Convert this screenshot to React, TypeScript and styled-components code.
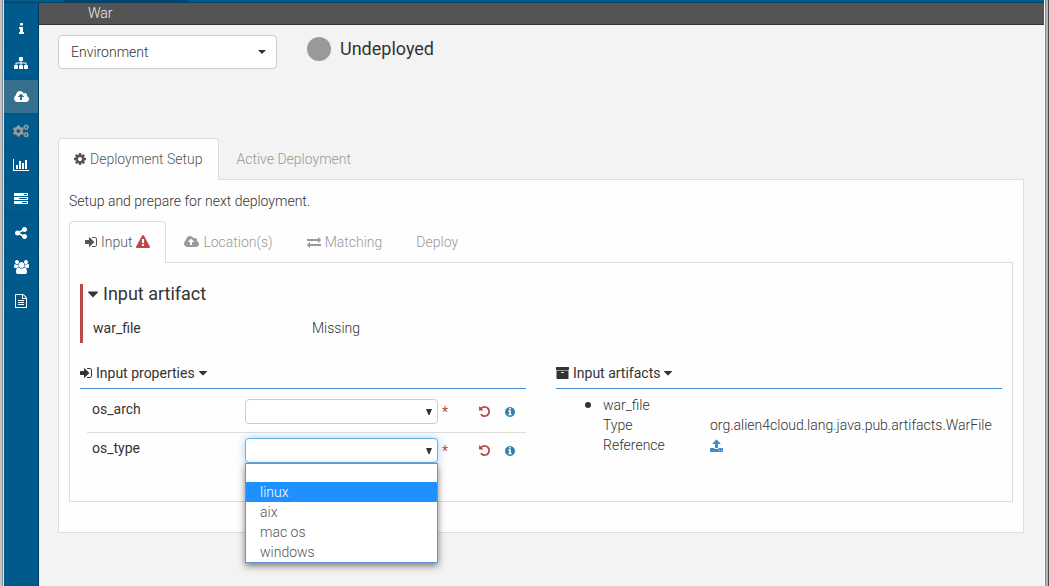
import React from "react";
import styled, { createGlobalStyle } from "styled-components";
import { FaCogs } from "react-icons/fa";

const GlobalStyle = createGlobalStyle`
  *, *::before, *::after { box-sizing: border-box; }
  body {
    margin: 0;
    background: #f3f3f3;
    color: #333;
    font: 300 14px/20px Roboto, "Liberation Sans", sans-serif;
  }
  button, select, input { font: inherit; color: inherit; }
  h2, h3, ul, dl, dd, p { margin: 0; padding: 0; font-weight: inherit; }
`;

/* Icon outlines on a 1792-unit-high grid: [left edge, width, path] */
const bar = "q0 26-19 45t-45 19h-1664q-26 0-45-19t-19-45v-256q0-26 19-45t45-19h1664q26 0 45 19t19 45z";
const glyphs = {
  info: [576, 640, "M1216 1344v128q0 26-19 45t-45 19h-512q-26 0-45-19t-19-45v-128q0-26 19-45t45-19h64v-384h-64q-26 0-45-19t-19-45v-128q0-26 19-45t45-19h384q26 0 45 19t19 45v576h64q26 0 45 19t19 45zm-128-1152v192q0 26-19 45t-45 19h-256q-26 0-45-19t-19-45v-192q0-26 19-45t45-19h256q26 0 45 19t19 45z"],
  sitemap: [0, 1792, "M1792 1248v320q0 40-28 68t-68 28h-320q-40 0-68-28t-28-68v-320q0-40 28-68t68-28h96v-192h-512v192h96q40 0 68 28t28 68v320q0 40-28 68t-68 28h-320q-40 0-68-28t-28-68v-320q0-40 28-68t68-28h96v-192h-512v192h96q40 0 68 28t28 68v320q0 40-28 68t-68 28h-320q-40 0-68-28t-28-68v-320q0-40 28-68t68-28h96v-192q0-52 38-90t90-38h512v-192h-96q-40 0-68-28t-28-68v-320q0-40 28-68t68-28h320q40 0 68 28t28 68v320q0 40-28 68t-68 28h-96v192h512q52 0 90 38t38 90v192h96q40 0 68 28t28 68z"],
  cloud: [-64, 1920, "M1216 864q0-14-9-23l-352-352q-9-9-23-9t-23 9l-351 351q-10 12-10 24 0 14 9 23t23 9h224v352q0 13 9.500 22.500t22.500 9.500h192q13 0 22.500-9.500t9.500-22.500v-352h224q13 0 22.500-9.500t9.500-22.500zm640 288q0 159-112.500 271.500t-271.500 112.500h-1088q-185 0-316.500-131.500t-131.500-316.500q0-130 70-240t188-165q-2-30-2-43 0-212 150-362t362-150q156 0 285.500 87t188.500 231q71-62 166-62 106 0 181 75t75 181q0 76-41 138 130 31 213.500 135.500t83.500 238.500z"],
  chart: [0, 2048, "M640 896v512h-256v-512h256zm384-512v1024h-256v-1024h256zm1024 1152v128h-2048v-1536h128v1408h1920zm-640-896v768h-256v-768h256zm384-384v1152h-256v-1152h256z"],
  tasks: [0, 1792, `M1024 1408h640v-128h-640v128zm-384-512h1024v-128h-1024v128zm640-512h384v-128h-384v128zM1792 1216v256${bar}M1792 704v256${bar}M1792 192v256${bar}`],
  share: [128, 1536, "M1344 1024q133 0 226.500 93.500t93.500 226.500-93.500 226.500-226.500 93.500-226.500-93.500-93.500-226.500q0-12 2-34l-360-180q-92 86-218 86-133 0-226.500-93.500t-93.500-226.500 93.500-226.500 226.500-93.500q126 0 218 86l360-180q-2-22-2-34 0-133 93.500-226.500t226.500-93.500 226.500 93.500 93.500 226.500-93.500 226.500-226.500 93.500q-126 0-218-86l-360 180q2 22 2 34t-2 34l360 180q92-86 218-86z"],
  users: [64, 1920, "M657 896q-162 5-265 128h-134q-82 0-138-40.500t-56-118.500q0-353 124-353 6 0 43.500 21t97.500 42.500 119 21.500q67 0 133-23-5 37-5 66 0 159 93 286zm1071 637q0 120-73 189.500t-194 69.500h-874q-121 0-194-69.500t-73-189.500q0-53 3.500-103.500t14-109 26.500-108.500 43-97.500 62-81 85.500-53.500 111.500-20q10 0 43 21.500t73 48 107 48 135 21.500 135-21.500 107-48 73-48 43-21.500q61 0 111.500 20t85.500 53.500 62 81 43 97.500 26.500 108.500 14 109 3.500 103.500zm-1024-1277q0 106-75 181t-181 75-181-75-75-181 75-181 181-75 181 75 75 181zm704 384q0 159-112.500 271.500t-271.500 112.500-271.500-112.500-112.500-271.500 112.500-271.500 271.500-112.500 271.500 112.500 112.500 271.500zm576 225q0 78-56 118.500t-138 40.500h-134q-103-123-265-128 93-127 93-286 0-29-5-66 66 23 133 23 59 0 119-21.500t97.500-42.500 43.500-21q124 0 124 353zm-128-609q0 106-75 181t-181 75-181-75-75-181 75-181 181-75 181 75 75 181z"],
  file: [128, 1536, "M1596 380q28 28 48 76t20 88v1152q0 40-28 68t-68 28h-1344q-40 0-68-28t-28-68v-1600q0-40 28-68t68-28h896q40 0 88 20t76 48zm-444-244v376h376q-10-29-22-41l-313-313q-12-12-41-22zm384 1528v-1024h-416q-40 0-68-28t-28-68v-416h-768v1536h1280zm-1024-864q0-14 9-23t23-9h704q14 0 23 9t9 23v64q0 14-9 23t-23 9h-704q-14 0-23-9t-9-23v-64zm736 224q14 0 23 9t9 23v64q0 14-9 23t-23 9h-704q-14 0-23-9t-9-23v-64q0-14 9-23t23-9h704zm0 256q14 0 23 9t9 23v64q0 14-9 23t-23 9h-704q-14 0-23-9t-9-23v-64q0-14 9-23t23-9h704z"],
  cog: [128, 1536, "M1152 896q0-106-75-181t-181-75-181 75-75 181 75 181 181 75 181-75 75-181zm512-109v222q0 12-8 23t-20 13l-185 28q-19 54-39 91 35 50 107 138 10 12 10 25t-9 23q-27 37-99 108t-94 71q-12 0-26-9l-138-108q-44 23-91 38-16 136-29 186-7 28-36 28h-222q-14 0-24.500-8.500t-11.500-21.500l-28-184q-49-16-90-37l-141 107q-10 9-25 9-14 0-25-11-126-114-165-168-7-10-7-23 0-12 8-23 15-21 51-66.500t54-70.500q-27-50-41-99l-183-27q-13-2-21-12.500t-8-23.500v-222q0-12 8-23t19-13l186-28q14-46 39-92-40-57-107-138-10-12-10-24 0-10 9-23 26-36 98.500-107.500t94.500-71.500q13 0 26 10l138 107q44-23 91-38 16-136 29-186 7-28 36-28h222q14 0 24.500 8.500t11.500 21.500l28 184q49 16 90 37l142-107q9-9 24-9 13 0 25 10 129 119 165 170 7 8 7 22 0 12-8 23-15 21-51 66.500t-54 70.500q26 50 41 98l183 28q13 2 21 12.500t8 23.500z"],
  signIn: [128, 1536, "M1312 896q0 26-19 45l-544 544q-19 19-45 19t-45-19-19-45v-288h-448q-26 0-45-19t-19-45v-384q0-26 19-45t45-19h448v-288q0-26 19-45t45-19 45 19l544 544q19 19 19 45zm352-352v704q0 119-84.500 203.500t-203.500 84.500h-320q-13 0-22.500-9.500t-9.500-22.500q0-4-1-20t-.5-26.500 3-23.500 10-19.500 20.500-6.500h320q66 0 113-47t47-113v-704q0-66-47-113t-113-47h-312l-11.500-1-11.500-3-8-5.500-7-9-2-13.500q0-4-1-20t-.5-26.500 3-23.500 10-19.500 20.500-6.500h320q119 0 203.500 84.500t84.500 203.500z"],
  warning: [0, 1792, "M1024 1375v-190q0-14-9.500-23.500t-22.500-9.500h-192q-13 0-22.500 9.500t-9.500 23.500v190q0 14 9.500 23.500t22.500 9.500h192q13 0 22.500-9.500t9.500-23.500zm-2-374l18-459q0-12-10-19-13-11-24-11h-220q-11 0-24 11-10 7-10 21l17 457q0 10 10 16.500t24 6.500h185q14 0 23.500-6.500t10.500-16.500zm-14-934l768 1408q35 63-2 126-17 29-46.500 46t-63.500 17h-1536q-34 0-63.500-17t-46.500-46q-37-63-2-126l768-1408q17-31 47-49t65-18 65 18 47 49z"],
  exchange: [0, 1792, "M1792 1184v192q0 13-9.500 22.500t-22.500 9.500h-1376v192q0 13-9.500 22.500t-22.500 9.500q-12 0-24-10l-319-320q-9-9-9-22 0-14 9-23l320-320q9-9 23-9 13 0 22.500 9.500t9.500 22.500v192h1376q13 0 22.500 9.500t9.500 22.500zm0-544q0 14-9 23l-320 320q-9 9-23 9-13 0-22.500-9.500t-9.500-22.500v-192h-1376q-13 0-22.500-9.500t-9.500-22.500v-192q0-13 9.500-22.500t22.500-9.500h1376v-192q0-14 9-23t23-9q12 0 24 10l319 319q9 9 9 23z"],
  caret: [384, 1024, "M1408 704q0 26-19 45l-448 448q-19 19-45 19t-45-19l-448-448q-19-19-19-45t19-45 45-19h896q26 0 45 19t19 45z"],
  archive: [64, 1664, "M1088 832q0-26-19-45t-45-19h-256q-26 0-45 19t-19 45 19 45 45 19h256q26 0 45-19t19-45zm576-192v960q0 26-19 45t-45 19h-1408q-26 0-45-19t-19-45v-960q0-26 19-45t45-19h1408q26 0 45 19t19 45zm64-448v256q0 26-19 45t-45 19h-1536q-26 0-45-19t-19-45v-256q0-26 19-45t45-19h1536q26 0 45 19t19 45z"],
  upload: [64, 1664, "M1344 1472q0-26-19-45t-45-19-45 19-19 45 19 45 45 19 45-19 19-45zm256 0q0-26-19-45t-45-19-45 19-19 45 19 45 45 19 45-19 19-45zm128-224v320q0 40-28 68t-68 28h-1472q-40 0-68-28t-28-68v-320q0-40 28-68t68-28h427q21 56 70.500 92t110.500 36h256q61 0 110.500-36t70.500-92h427q40 0 68 28t28 68zm-325-648q-17 40-59 40h-256v448q0 26-19 45t-45 19h-256q-26 0-45-19t-19-45v-448h-256q-42 0-59-40-17-39 14-69l448-448q18-19 45-19t45 19l448 448q31 30 14 69z"],
  undo: [128, 1536, "M1664 896q0 156-61 298t-164 245-245 164-298 61q-172 0-327-72.500t-264-204.500q-7-10-6.500-22.500t8.500-20.500l137-138q10-9 25-9 16 2 23 12 73 95 179 147t225 52q104 0 198.500-40.500t163.500-109.500 109.500-163.500 40.500-198.500-40.500-198.500-109.500-163.500-163.500-109.500-198.500-40.500q-98 0-188 35.500t-160 101.500l137 138q31 30 14 69-17 40-59 40h-448q-26 0-45-19t-19-45v-448q0-42 40-59 39-17 69 14l130 129q107-101 244.500-156.500t284.500-55.500q156 0 298 61t245 164 164 245 61 298z"],
  infoCircle: [128, 1536, "M1152 1376v-160q0-14-9-23t-23-9h-96v-512q0-14-9-23t-23-9h-320q-14 0-23 9t-9 23v160q0 14 9 23t23 9h96v320h-96q-14 0-23 9t-9 23v160q0 14 9 23t23 9h448q14 0 23-9t9-23zm-128-896v-160q0-14-9-23t-23-9h-192q-14 0-23 9t-9 23v160q0 14 9 23t23 9h192q14 0 23-9t9-23zm640 416q0 209-103 385.500t-279.500 279.500-385.500 103-385.500-103-279.500-279.500-103-385.500 103-385.500 279.500-279.500 385.500-103 385.500 103 279.500 279.500 103 385.500z"],
} satisfies Record<string, [number, number, string]>;

type GlyphName = keyof typeof glyphs;

const Svg = styled.svg<{ $color?: string }>`
  flex: none;
  fill: ${(p) => p.$color ?? "currentColor"};
`;

function Icon({ name, size = 14, color }: { name: GlyphName; size?: number; color?: string }) {
  const [x, w, d] = glyphs[name];
  return (
    <Svg $color={color} aria-hidden="true" width={Math.round(((w as number) * size) / 1792)} height={size} viewBox={`${x} 0 ${w} 1792`}>
      <path d={d as string} />
    </Svg>
  );
}

const Frame = styled.div`
  min-height: 100vh;
  display: flex;
`;

const LeftEdge = styled.div`
  flex: none;
  width: 4px;
  background: linear-gradient(to right, #c4c4c4 2px, #85888a 2px 3px, #e4e8ea 3px);
`;

const RightEdge = styled.div`
  flex: none;
  width: 5px;
  background: linear-gradient(to right, #fafafa 1px, #8c8c8c 1px 2px, #b4b4b4 2px 4px, #4a4a4a 4px);
`;

const Page = styled.div`
  flex: 1;
  min-width: 0;
  display: flex;
  flex-direction: column;
`;

const TopStrip = styled.div`
  height: 3px;
  padding-left: 60px;
  background: #005a8c;
  border-bottom: 1px solid #00436a;
`;

const TopStripActive = styled.div`
  width: 124px;
  height: 2px;
  background: #00436a;
`;

const Body = styled.div`
  flex: 1;
  display: flex;
`;

const Sidebar = styled.nav`
  flex: none;
  width: 35px;
  padding-top: 9px;
  background: #005a8c;
  border-right: 1px solid #003a5c;
`;

const SideLink = styled.a<{ $active?: boolean; $muted?: boolean }>`
  display: flex;
  align-items: center;
  justify-content: center;
  height: 34px;
  border-bottom: 1px solid #005382;
  background: ${(p) => (p.$active ? "#35718f" : "transparent")};
  color: ${(p) => (p.$muted ? "#999" : "#fff")};
`;

const Main = styled.main`
  flex: 1;
  min-width: 0;
`;

const Breadcrumb = styled.header`
  height: 22px;
  padding-left: 49px;
  background: #545454;
  border-bottom: 1px solid #333;
  color: #eee;
`;

const Content = styled.div`
  padding: 10px 20px 40px 19px;
`;

const StatusRow = styled.div`
  display: flex;
  align-items: flex-start;
  gap: 30px;
  margin-bottom: 69px;
`;

const SelectWrap = styled.div<{ $width: number }>`
  position: relative;
  flex: none;
  width: ${(p) => p.$width}px;
`;

const EnvironmentSelect = styled.select`
  display: block;
  appearance: none;
  width: 100%;
  height: 34px;
  padding: 0 12px;
  border: 1px solid #ccc;
  border-radius: 4px;
  background: #fff;
`;

const Arrow = styled.svg<{ $right: number }>`
  position: absolute;
  top: 50%;
  right: ${(p) => p.$right}px;
  transform: translateY(-50%);
  fill: #333;
  pointer-events: none;
`;

const Status = styled.div`
  display: flex;
  align-items: center;
  gap: 9px;
  height: 28px;
  font-size: 18px;
  font-weight: 400;
`;

const StatusDot = styled.span`
  width: 24px;
  height: 24px;
  border-radius: 50%;
  background: #999;
`;

const TabList = styled.div`
  display: flex;
  gap: 2px;
`;

const Tab = styled.button<{ $active?: boolean }>`
  position: relative;
  display: flex;
  align-items: center;
  gap: 4px;
  height: 42px;
  margin-bottom: -1px;
  padding: 0 15px 2px;
  border: 1px solid ${(p) => (p.$active ? "#ddd" : "transparent")};
  border-bottom: 0;
  border-radius: 4px 4px 0 0;
  background: ${(p) => (p.$active ? "#fefefe" : "transparent")};
  color: ${(p) => (p.$active ? "#555" : "#999")};
`;

const Panel = styled.section`
  padding: 10px 10px 30px;
  border: 1px solid #ddd;
  background: #fefefe;
`;

const Intro = styled.p`
  padding: 1px 0 10px;
`;

const ArtifactBox = styled.section`
  margin: 11px 0 20px;
  padding-left: 5px;
  border-left: 3px solid #b94a48;
`;

const ArtifactTitle = styled.h2`
  display: flex;
  align-items: center;
  gap: 5px;
  height: 20px;
  font-size: 18px;
  font-weight: 400;
`;

const ArtifactRow = styled.div`
  display: flex;
  padding: 14px 5px 5px;
`;

const ArtifactName = styled.span`
  flex: none;
  width: 219px;
  font-weight: 400;
`;

const Columns = styled.div`
  display: grid;
  grid-template-columns: 1fr 1fr;
  gap: 30px;
`;

const ColumnTitle = styled.h3`
  display: flex;
  align-items: center;
  gap: 4px;
  height: 26px;
  padding-bottom: 5px;
  border-bottom: 1px solid #428bca;
  font-size: 14px;
  font-weight: 400;
`;

const PropertyList = styled.div`
  padding: 5px 0 0 7px;
`;

const PropertyRow = styled.div`
  display: flex;
  align-items: center;
  padding: 5px 3px 8px 5px;
  & + & { border-top: 1px solid #ddd; }
`;

const PropertyName = styled.label`
  flex: 1;
  align-self: flex-start;
  font-weight: 400;
`;

const PropertySelect = styled.select<{ $open?: boolean }>`
  display: block;
  appearance: none;
  width: 100%;
  height: 25px;
  padding: 0 10px;
  border: 1px solid ${(p) => (p.$open ? "#66afe9" : "#ccc")};
  border-radius: 4px;
  background: #fff;
  box-shadow: ${(p) => (p.$open ? "0 0 8px rgba(102, 175, 233, 0.6)" : "none")};
`;

const Required = styled.span`
  width: 33px;
  padding-left: 4px;
  color: #b94a48;
  font-weight: 400;
`;

const IconButton = styled.button<{ $color: string }>`
  display: flex;
  justify-content: center;
  width: 26px;
  padding: 0;
  border: 0;
  background: none;
  color: ${(p) => p.$color};
`;

const Menu = styled.ul`
  position: absolute;
  z-index: 1;
  top: 100%;
  left: 0;
  right: 0;
  border: 1px solid #6b93d3;
  background: #fff;
  box-shadow: 0 3px 7px rgba(0, 0, 0, 0.5);
  list-style: none;
`;

const MenuItem = styled.li<{ $selected?: boolean }>`
  min-height: 18px;
  padding-left: 14px;
  background: ${(p) => (p.$selected ? "#1e90ff" : "transparent")};
  color: ${(p) => (p.$selected ? "#fff" : "#555")};
`;

const ArtifactList = styled.ul`
  && { padding: 5px 0 0 47px; }
  li::marker { font-size: 18px; }
`;

const Definition = styled.dl`
  display: grid;
  grid-template-columns: 107px 1fr;
`;

const UploadLink = styled.a`
  display: flex;
  align-items: center;
  width: 13px;
  height: 20px;
  padding-top: 2px;
  color: #428bca;
`;

const sideLinks: { label: string; icon?: GlyphName; active?: boolean }[] = [
  { label: "Information", icon: "info" },
  { label: "Topology", icon: "sitemap" },
  { label: "Deployments", icon: "cloud", active: true },
  { label: "Runtime" },
  { label: "Statistics", icon: "chart" },
  { label: "Tasks", icon: "tasks" },
  { label: "Share", icon: "share" },
  { label: "Users", icon: "users" },
  { label: "Logs", icon: "file" },
];

const osTypes = ["", "linux", "aix", "mac os", "windows"];

function Property({ name, options, open }: { name: string; options: string[]; open?: boolean }) {
  return (
    <PropertyRow>
      <PropertyName htmlFor={name}>{name}</PropertyName>
      <SelectWrap $width={193}>
        <PropertySelect id={name} $open={open} defaultValue="">
          {options.map((o) => <option key={o}>{o}</option>)}
        </PropertySelect>
        <Arrow $right={6} width="6" height="6" viewBox="0 0 6 6"><path d="M0 0h6L3.500 6h-1z" /></Arrow>
        {open && (
          <Menu role="listbox" aria-label={name}>
            {options.map((o) => (
              <MenuItem key={o} role="option" aria-selected={o === "linux"} $selected={o === "linux"}>{o}</MenuItem>
            ))}
          </Menu>
        )}
      </SelectWrap>
      <Required>*</Required>
      <IconButton type="button" aria-label={`Reset ${name}`} $color="#b94a48"><Icon name="undo" size={13} /></IconButton>
      <IconButton type="button" aria-label={`About ${name}`} $color="#2f83ab"><Icon name="infoCircle" size={12} /></IconButton>
    </PropertyRow>
  );
}

export default function App() {
  return (
    <>
      <GlobalStyle />
      <Frame>
        <LeftEdge />
        <Page>
          <TopStrip><TopStripActive /></TopStrip>
          <Body>
            <Sidebar>
              {sideLinks.map((l) => (
                <SideLink key={l.label} href="#" aria-label={l.label} $active={l.active} $muted={!l.icon}>
                  {l.icon ? <Icon name={l.icon} /> : <FaCogs size={16} />}
                </SideLink>
              ))}
            </Sidebar>
            <Main>
              <Breadcrumb>War</Breadcrumb>
              <Content>
                <StatusRow>
                  <SelectWrap $width={219}>
                    <EnvironmentSelect aria-label="Environment"><option>Environment</option></EnvironmentSelect>
                    <Arrow $right={11} width="8" height="4" viewBox="0 0 8 4"><path d="M0 0h8L4 4z" /></Arrow>
                  </SelectWrap>
                  <Status><StatusDot />Undeployed</Status>
                </StatusRow>
                <TabList role="tablist">
                  <Tab type="button" role="tab" aria-selected $active><Icon name="cog" />Deployment Setup</Tab>
                  <Tab type="button" role="tab">Active Deployment</Tab>
                </TabList>
                <Panel>
                  <Intro>Setup and prepare for next deployment.</Intro>
                  <TabList role="tablist">
                    <Tab type="button" role="tab" aria-selected $active>
                      <Icon name="signIn" />Input<Icon name="warning" color="#b94a48" />
                    </Tab>
                    <Tab type="button" role="tab"><Icon name="cloud" />Location(s)</Tab>
                    <Tab type="button" role="tab"><Icon name="exchange" />Matching</Tab>
                    <Tab type="button" role="tab">Deploy</Tab>
                  </TabList>
                  <Panel>
                    <ArtifactBox>
                      <ArtifactTitle><Icon name="caret" size={18} />Input artifact</ArtifactTitle>
                      <ArtifactRow><ArtifactName>war_file</ArtifactName><span>Missing</span></ArtifactRow>
                    </ArtifactBox>
                    <Columns>
                      <section>
                        <ColumnTitle><Icon name="signIn" />Input properties<Icon name="caret" /></ColumnTitle>
                        <PropertyList>
                          <Property name="os_arch" options={[""]} />
                          <Property name="os_type" options={osTypes} open />
                        </PropertyList>
                      </section>
                      <section>
                        <ColumnTitle><Icon name="archive" />Input artifacts<Icon name="caret" /></ColumnTitle>
                        <ArtifactList>
                          <li>
                            war_file
                            <Definition>
                              <dt>Type</dt>
                              <dd>org.alien4cloud.lang.java.pub.artifacts.WarFile</dd>
                              <dt>Reference</dt>
                              <dd><UploadLink href="#" aria-label="Upload"><Icon name="upload" /></UploadLink></dd>
                            </Definition>
                          </li>
                        </ArtifactList>
                      </section>
                    </Columns>
                  </Panel>
                </Panel>
              </Content>
            </Main>
          </Body>
        </Page>
        <RightEdge />
      </Frame>
    </>
  );
}
